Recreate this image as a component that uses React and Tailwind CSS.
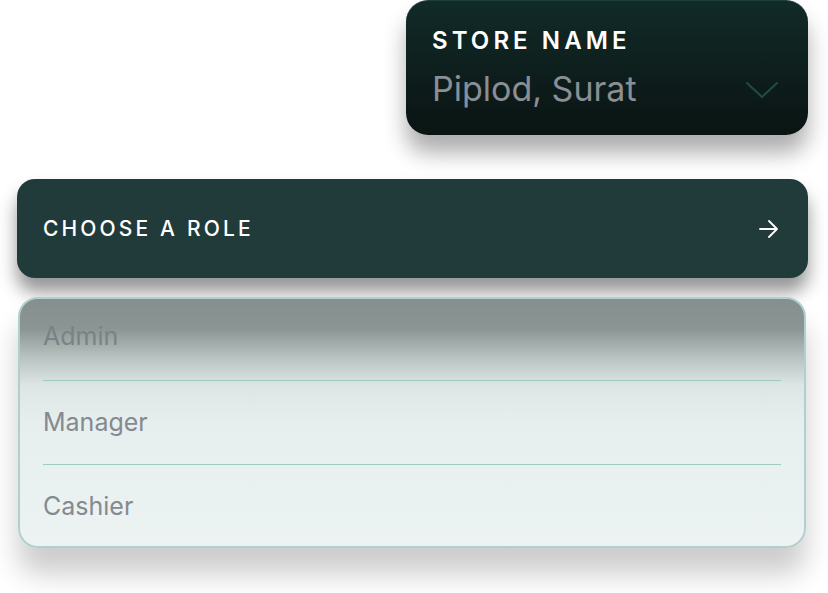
export default function App() {
  const roles = ["Admin", "Manager", "Cashier"]
  const rowHeights = ["h-[82px]", "h-[84px]", "h-[82px]"]

  return (
    <div className="w-[828px] h-[593px] bg-white overflow-hidden font-['Inter',sans-serif]">

      {/* store picker */}
      <div className="ml-[406px] w-[402px] h-[135px] rounded-[22px] bg-gradient-to-b from-[#112b28] to-[#0a1413] border-t border-[#1d3f3b] shadow-[0_18px_22px_rgba(0,0,0,0.32)] px-[26px] pt-[28px]">
        <div className="text-white text-[24px] font-semibold tracking-[0.17em] leading-none">
          STORE NAME
        </div>
        <div className="flex items-center justify-between mt-[19px]">
          <span className="text-[#8a8e95] text-[34px] leading-none">Piplod, Surat</span>
          <svg width="34" height="20" viewBox="0 0 34 20" className="mr-[3px] mt-[2px]">
            <path d="M2 3 L17 17 L32 3" fill="none" stroke="#1f4a45" strokeWidth="2.2" strokeLinecap="round" strokeLinejoin="round" />
          </svg>
        </div>
      </div>

      {/* role header */}
      <div className="ml-[17px] mt-[44px] w-[791px] h-[99px] rounded-[18px] bg-[#213b3b] shadow-[0_14px_18px_rgba(0,0,0,0.42)] flex items-center justify-between pl-[26px] pr-[28px]">
        <span className="text-white text-[21px] font-medium tracking-[0.15em] leading-none">
          CHOOSE A ROLE
        </span>
        <svg width="22" height="22" viewBox="0 0 22 22">
          <path d="M2 11 H19 M11 3 L19 11 L11 19" fill="none" stroke="#ffffff" strokeWidth="1.8" strokeLinecap="round" strokeLinejoin="round" />
        </svg>
      </div>

      {/* role list */}
      <div className="ml-[18px] mt-[19px] w-[788px] h-[251px] rounded-[20px] border-2 border-[#b0d0cc] bg-[linear-gradient(to_bottom,#858f8d_0%,#8b9593_12%,#b9c4c2_24%,#dde6e5_35%,#e6eeee_50%,#edf3f3_100%)] shadow-[0_26px_28px_rgba(0,0,0,0.2)] px-[23px]">
        {roles.map((role, i) => (
          <div
            key={role}
            className={`${rowHeights[i]} flex items-center ${i < roles.length - 1 ? "border-b border-[#9ecac4]" : ""}`}
          >
            <span className={`text-[25px] leading-none ${i === 0 ? "text-[#7a8285] -mt-[6px]" : "text-[#858990]"}`}>
              {role}
            </span>
          </div>
        ))}
      </div>

    </div>
  )
}
